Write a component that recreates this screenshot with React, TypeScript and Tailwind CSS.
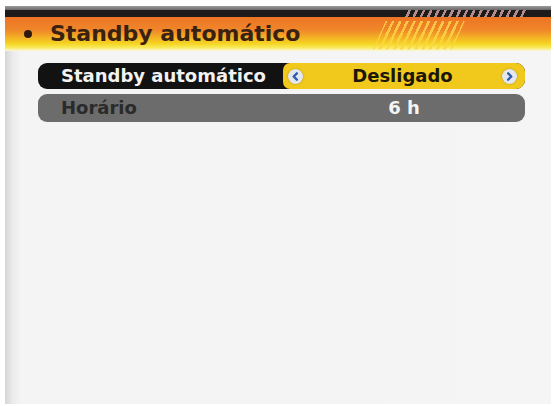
import React from "react";

function Chevron({ dir }: { dir: "left" | "right" }) {
  return (
    <span className="flex h-[15px] w-[15px] items-center justify-center rounded-full bg-[#e4e8ee] shadow-[0_0_2px_rgba(0,0,0,0.3)]">
      <svg width="9" height="9" viewBox="0 0 10 10">
        {dir === "left" ? (
          <path d="M6.5 1.5 L3 5 L6.5 8.5" fill="none" stroke="#2d5bb0" strokeWidth="2.6" strokeLinecap="round" strokeLinejoin="round" />
        ) : (
          <path d="M3.5 1.5 L7 5 L3.5 8.5" fill="none" stroke="#2d5bb0" strokeWidth="2.6" strokeLinecap="round" strokeLinejoin="round" />
        )}
      </svg>
    </span>
  );
}

export default function App() {
  return (
    <div
      className="flex h-[406px] w-[554px] flex-col bg-white pb-[2px] pl-[5px] pr-[3px] pt-[6px]"
      style={{ fontFamily: '"DejaVu Sans", "Liberation Sans", sans-serif' }}
    >
      {/* top dark bar */}
      <div className="flex h-[11px] flex-col">
        <div className="h-[4px] bg-[linear-gradient(to_bottom,#9a9a9a,#6a6a6a)]" />
        <div className="flex flex-1 bg-[#1c1a1a]">
          <div className="flex-1" />
          <div className="w-[122px] bg-[repeating-linear-gradient(115deg,#1c1a1a_0px,#1c1a1a_4px,#b48c8c_4px,#b48c8c_6.5px)]" />
          <div className="w-[25px]" />
        </div>
      </div>

      {/* orange header */}
      <div className="flex h-[34px] items-center bg-[linear-gradient(to_bottom,#ec7424_0%,#f0862a_38%,#f4b424_62%,#f6d422_78%,#f8ea5a_90%,#fbf6dc_100%)] pl-[19px]">
        <span className="h-[8px] w-[8px] rounded-full bg-[#2e1a0c]" />
        <span className="ml-[18px] text-[22px] font-bold leading-none text-[#3a2210]">Standby automático</span>
        <div className="flex-1" />
        <div className="mt-[2px] h-[29px] w-[92px] bg-[repeating-linear-gradient(115deg,transparent_0px,transparent_4px,rgba(252,212,70,0.85)_4px,rgba(252,212,70,0.85)_6.5px)] [clip-path:polygon(13px_0,100%_0,calc(100%-13px)_100%,0_100%)]" />
        <div className="w-[86px]" />
      </div>

      {/* content */}
      <div className="flex flex-1 flex-col gap-[5px] bg-[linear-gradient(to_right,#d6d6d6_0px,#ececec_8px,#f4f4f4_16px,#f5f5f5_100%)] pl-[33px] pr-[26px] pt-[12px]">
        <div className="flex h-[26px] overflow-hidden rounded-[9px] bg-[#121212]">
          <div className="flex w-[245px] items-center pl-[23px] text-[18px] font-bold leading-none text-[#f2f2f2]">
            Standby automático
          </div>
          <div className="flex flex-1 items-center rounded-l-[7px] bg-[#f1c91c] pl-[5px] pr-[8px]">
            <Chevron dir="left" />
            <div className="flex-1 text-center text-[18px] font-bold leading-none text-[#1a1608]">Desligado</div>
            <Chevron dir="right" />
          </div>
        </div>
        <div className="flex h-[28px] items-center rounded-[9px] bg-[#6c6c6c]">
          <div className="w-[245px] pl-[23px] text-[18px] font-bold leading-none text-[#2a2a2a]">Horário</div>
          <div className="flex-1 text-center text-[18px] font-bold leading-none text-[#f4f4f4]">6 h</div>
        </div>
      </div>
    </div>
  );
}
